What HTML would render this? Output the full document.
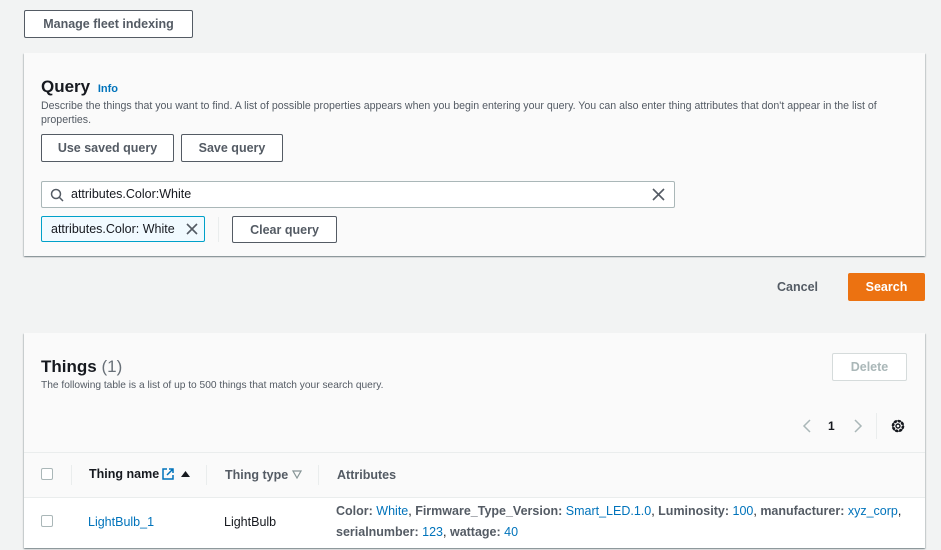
<!DOCTYPE html>
<html><head><meta charset="utf-8"><style>
*{box-sizing:border-box;margin:0;padding:0}
body{width:941px;height:550px;background:#f2f3f3;font-family:"Liberation Sans",sans-serif;color:#16191f;position:relative;overflow:hidden;font-size:12px}
.a{position:absolute}
.btn{position:absolute;border:1px solid #545b64;background:#fff;font-weight:bold;font-size:12.5px;color:#545b64;display:flex;align-items:center;justify-content:center;border-radius:2px}
.panel{position:absolute;left:24px;width:901px;background:#fafafa;box-shadow:0 1px 1px rgba(0,28,36,.3),1px 1px 1px rgba(0,28,36,.15),-1px 1px 1px rgba(0,28,36,.15)}
.lnk{color:#0073bb}
b{color:#545b64}
</style></head><body>
<div class="btn" style="left:24px;top:10px;width:169px;height:28px;color:#545b64">Manage fleet indexing</div>

<div class="panel" style="top:53px;height:203px"></div>
<div class="a" style="left:41px;top:77px;font-size:17px;font-weight:bold">Query <span class="lnk" style="font-size:11px;margin-left:3px">Info</span></div>
<div class="a" style="left:41px;top:99px;width:870px;font-size:10.6px;line-height:14px;color:#545b64">Describe the things that you want to find. A list of possible properties appears when you begin entering your query. You can also enter thing attributes that don't appear in the list of properties.</div>
<div class="btn" style="left:41px;top:134px;width:133px;height:28px">Use saved query</div>
<div class="btn" style="left:181px;top:134px;width:102px;height:28px">Save query</div>
<div class="a" style="left:41px;top:181px;width:634px;height:27px;background:#fff;border:1px solid #aab7b8;border-radius:2px"></div>
<svg class="a" style="left:50px;top:188px" width="14" height="14"><circle cx="6" cy="6" r="4.5" fill="none" stroke="#545b64" stroke-width="1.5"/><path d="M9.5 9.5L13 13" stroke="#545b64" stroke-width="1.5"/></svg>
<div class="a" style="left:71px;top:187px;font-size:12.5px">attributes.Color:White</div>
<svg class="a" style="left:652px;top:188px" width="13" height="13"><path d="M1 1L12 12M12 1L1 12" stroke="#545b64" stroke-width="1.6"/></svg>
<div class="a" style="left:41px;top:216px;width:164px;height:26px;background:#f1faff;border:1px solid #00a1c9;border-radius:2px"></div>
<div class="a" style="left:51px;top:222px;font-size:12.5px">attributes.Color: White</div>
<svg class="a" style="left:186px;top:223px" width="12" height="12"><path d="M1 1L11 11M11 1L1 11" stroke="#545b64" stroke-width="1.6"/></svg>
<div class="a" style="left:218px;top:217px;width:1px;height:25px;background:#eaeded"></div>
<div class="btn" style="left:232px;top:216px;width:105px;height:27px">Clear query</div>

<div class="a" style="left:777px;top:280px;font-weight:bold;color:#545b64;font-size:12.5px">Cancel</div>
<div class="btn" style="left:848px;top:273px;width:77px;height:28px;background:#ec7211;border-color:#ec7211;color:#fff">Search</div>

<div class="panel" style="top:333px;height:215px"></div>
<div class="a" style="left:24px;top:497px;width:901px;height:51px;background:#fff"></div>
<div class="a" style="left:24px;top:452px;width:901px;height:1px;background:#eaeded"></div>
<div class="a" style="left:24px;top:497px;width:901px;height:1px;background:#eaeded"></div>
<div class="a" style="left:41px;top:357px;font-size:17px;font-weight:bold">Things <span style="font-weight:normal;color:#687078">(1)</span></div>
<div class="a" style="left:41px;top:380px;font-size:10.2px;color:#545b64">The following table is a list of up to 500 things that match your search query.</div>
<div class="btn" style="left:832px;top:353px;width:75px;height:28px;border-color:#d5dbdb;color:#aab7b8">Delete</div>
<svg class="a" style="left:800px;top:418px" width="14" height="16"><path d="M10 2L4 8L10 14" fill="none" stroke="#aab7b8" stroke-width="1.5"/></svg>
<div class="a" style="left:828px;top:419px;font-weight:bold">1</div>
<svg class="a" style="left:851px;top:418px" width="14" height="16"><path d="M4 2L10 8L4 14" fill="none" stroke="#aab7b8" stroke-width="1.5"/></svg>
<div class="a" style="left:876px;top:413px;width:1px;height:26px;background:#eaeded"></div>
<svg class="a" style="left:890px;top:418px" width="16" height="16"><circle cx="8" cy="8" r="5" fill="none" stroke="#16191f" stroke-width="2.6" stroke-dasharray="2.6 1.3"/><circle cx="8" cy="8" r="5.2" fill="none" stroke="#16191f" stroke-width="1.2"/><circle cx="8" cy="8" r="2" fill="none" stroke="#16191f" stroke-width="1.4"/></svg>

<div class="a" style="left:41px;top:468px;width:12px;height:12px;border:1px solid #aab7b8;background:#fff;border-radius:2px"></div>
<div class="a" style="left:71px;top:465px;width:1px;height:20px;background:#eaeded"></div>
<div class="a" style="left:89px;top:467px;font-weight:bold;font-size:12.5px">Thing name</div>
<svg class="a" style="left:161px;top:467px" width="14" height="14"><path d="M6 2H2V12H12V8M8 2H12V6M12 2L6 8" fill="none" stroke="#0073bb" stroke-width="1.5"/></svg>
<svg class="a" style="left:180px;top:469px" width="11" height="10"><path d="M1 8L5.5 2L10 8Z" fill="#16191f"/></svg>
<div class="a" style="left:206px;top:465px;width:1px;height:20px;background:#eaeded"></div>
<div class="a" style="left:225px;top:468px;font-weight:bold;font-size:12.5px;color:#545b64">Thing type</div>
<svg class="a" style="left:292px;top:470px" width="10" height="9"><path d="M1 1H9L5 8Z" fill="none" stroke="#879596" stroke-width="1.2"/></svg>
<div class="a" style="left:318px;top:465px;width:1px;height:20px;background:#eaeded"></div>
<div class="a" style="left:337px;top:468px;font-weight:bold;font-size:12.5px;color:#545b64">Attributes</div>

<div class="a" style="left:41px;top:515px;width:12px;height:12px;border:1px solid #aab7b8;background:#fff;border-radius:2px"></div>
<div class="a lnk" style="left:88px;top:515px;font-size:12.5px">LightBulb_1</div>
<div class="a" style="left:224px;top:515px;font-size:12.5px">LightBulb</div>
<div class="a" style="left:336px;top:501px;font-size:12.5px;line-height:21px;width:580px"><b>Color:</b> <span class="lnk">White</span>, <b>Firmware_Type_Version:</b> <span class="lnk">Smart_LED.1.0</span>, <b>Luminosity:</b> <span class="lnk">100</span>, <b>manufacturer:</b> <span class="lnk">xyz_corp</span>,<br><b>serialnumber:</b> <span class="lnk">123</span>, <b>wattage:</b> <span class="lnk">40</span></div>
</body></html>
